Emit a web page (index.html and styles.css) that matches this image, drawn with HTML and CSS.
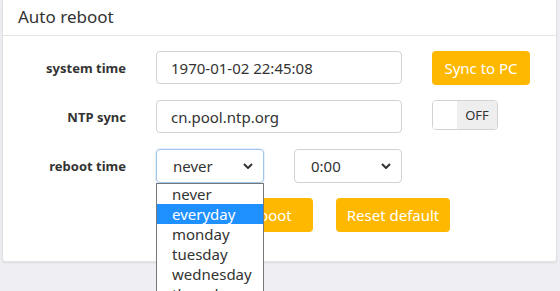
FILE: index.html
```html
<!DOCTYPE html>
<html lang="en">
<head>
    <meta charset="UTF-8">
    <meta name="viewport" content="width=device-width, initial-scale=1.0">
    <title>Auto reboot</title>
    <link rel="stylesheet" href="styles.css">
</head>
<body>
    <!-- Auto reboot card -->
    <div class="card">
        <div class="card-header">Auto reboot</div>
        <div class="card-body">
            <div class="row">
                <label class="label">system time</label>
                <input class="field" type="text" value="1970-01-02 22:45:08">
                <button class="btn btn-sync">Sync to PC</button>
            </div>
            <div class="row">
                <label class="label">NTP sync</label>
                <input class="field" type="text" value="cn.pool.ntp.org">
                <div class="switch">
                    <span class="switch-knob"></span>
                    <span class="switch-text">OFF</span>
                </div>
            </div>
            <div class="row">
                <label class="label">reboot time</label>
                <div class="select-wrap">
                    <div class="select focused">
                        <span>never</span>
                        <svg class="chevron" viewBox="0 0 10 6" width="10" height="6"><path d="M1 1l4 4 4-4" fill="none" stroke="#333" stroke-width="2"/></svg>
                    </div>
                    <!-- open dropdown list -->
                    <ul class="dropdown">
                        <li>never</li>
                        <li class="active">everyday</li>
                        <li>monday</li>
                        <li>tuesday</li>
                        <li>wednesday</li>
                        <li>thursday</li>
                    </ul>
                </div>
                <div class="select">
                    <span>0:00</span>
                    <svg class="chevron" viewBox="0 0 10 6" width="10" height="6"><path d="M1 1l4 4 4-4" fill="none" stroke="#333" stroke-width="2"/></svg>
                </div>
            </div>
            <div class="row buttons">
                <button class="btn btn-save">Save and reboot</button>
                <button class="btn btn-reset">Reset default</button>
            </div>
        </div>
    </div>
</body>
</html>
```

FILE: styles.css
```css
/* General body styling */
body {
    font-family: 'Noto Sans', 'Open Sans', sans-serif;
    margin: 0;
    padding: 0;
    background: #efeff3;
    color: #333;
    height: 291px;
    overflow: hidden;
}

/* Card */
.card {
    background: #ffffff;
    margin: 0 3px 0 2px;
    border: 1px solid #e2e2e2;
    border-top: none;
    border-radius: 0 0 3px 3px;
    box-shadow: 0 1px 2px rgba(0, 0, 0, 0.08);
}

.card-header {
    height: 35px;
    line-height: 34px;
    padding-left: 15px;
    font-size: 17px;
    color: #333;
    border-bottom: 1px solid #e4e4e4;
}

.card-body {
    padding: 15px 0 29px 0;
    display: flex;
    flex-direction: column;
    gap: 16px;
}

/* Rows */
.row {
    display: flex;
    align-items: center;
    height: 33px;
}

.label {
    width: 123px;
    text-align: right;
    font-size: 13px;
    font-weight: bold;
    margin-right: 30px;
}

.field {
    box-sizing: border-box;
    width: 246px;
    height: 33px;
    padding: 0 14px;
    border: 1px solid #d2d2d2;
    border-radius: 4px;
    font-family: inherit;
    font-size: 15px;
    color: #333;
    outline: none;
    margin-right: 30px;
}

/* Buttons */
.btn {
    box-sizing: border-box;
    height: 34px;
    border: none;
    border-radius: 4px;
    background: #ffb800;
    color: #ffffff;
    font-family: inherit;
    font-size: 15px;
    padding: 0 15px;
    cursor: pointer;
}

.btn-sync {
    width: 98px;
    padding: 0;
}

.buttons {
    height: 34px;
    padding-left: 153px;
}

.btn-save {
    width: 157px;
    margin-right: 23px;
}

.btn-reset {
    width: 114px;
    padding: 0;
}

/* Switch */
.switch {
    box-sizing: border-box;
    width: 66px;
    height: 30px;
    margin-top: -3px;
    border: 1px solid #d2d2d2;
    border-radius: 4px;
    display: flex;
    overflow: hidden;
}

.switch-knob {
    width: 24px;
    background: #ffffff;
}

.switch-text {
    flex: 1;
    background: #eeeeee;
    font-size: 13px;
    line-height: 28px;
    text-align: center;
    color: #333;
}

/* Selects */
.select-wrap {
    position: relative;
    margin-right: 30px;
}

.select {
    box-sizing: border-box;
    width: 108px;
    height: 34px;
    border: 1px solid #d2d2d2;
    border-radius: 4px;
    display: flex;
    align-items: center;
    justify-content: space-between;
    padding: 0 10px 0 16px;
    font-size: 15px;
    color: #333;
}

.select.focused {
    border-color: #9ec5ea;
    box-shadow: 0 0 0 1px rgba(158, 197, 234, 0.25);
}

.chevron {
    display: block;
}

/* Open dropdown list */
.dropdown {
    position: absolute;
    top: 34px;
    left: 0;
    z-index: 5;
    box-sizing: border-box;
    width: 108px;
    margin: 0;
    padding: 0;
    list-style: none;
    background: #ffffff;
    border: 1px solid #777;
    font-size: 15px;
}

.dropdown li {
    height: 20px;
    line-height: 20px;
    padding-left: 15px;
    color: #333;
}

.dropdown li.active {
    background: #1e90ff;
    color: #ffffff;
}
```
